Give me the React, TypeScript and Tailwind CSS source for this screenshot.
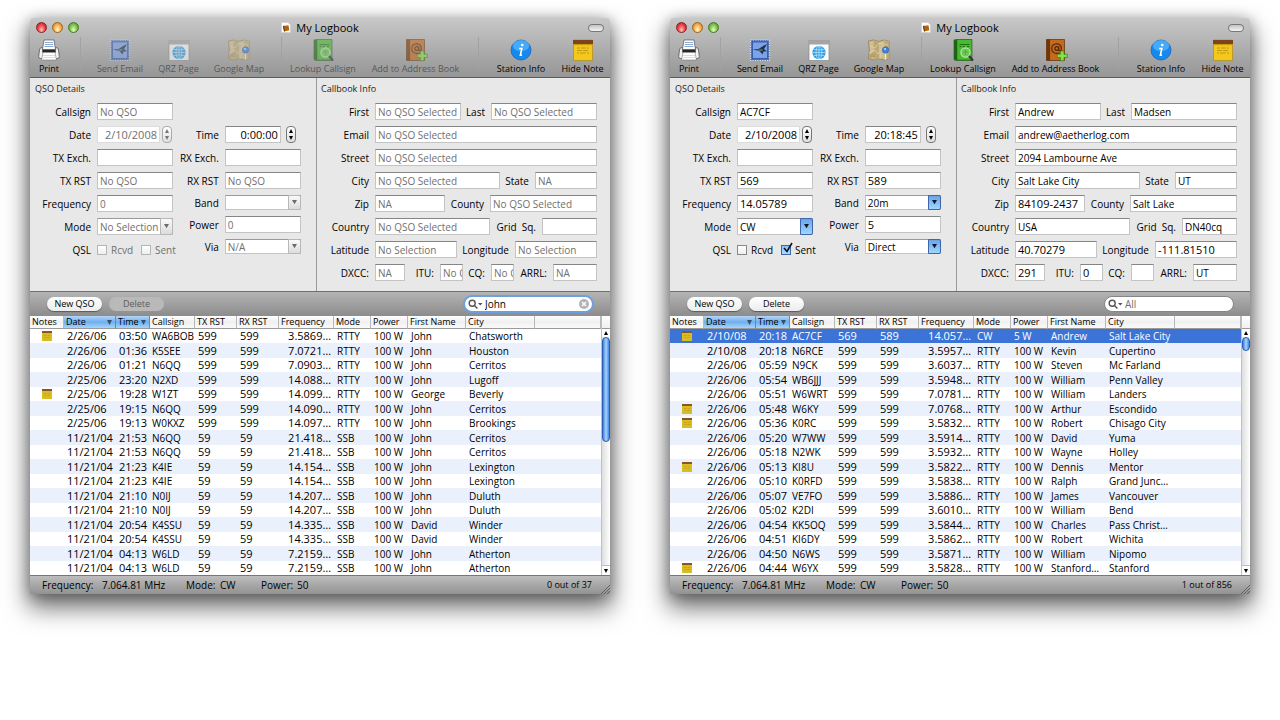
import { useId, type ReactNode } from "react";
import clsx from "clsx";

type Row = {
  note?: boolean;
  date: string;
  time: string;
  call: string;
  tx: string;
  rx: string;
  freq: string;
  mode: string;
  power: string;
  name: string;
  city: string;
};

type Log = {
  active: boolean;
  qso: Record<string, string>;
  rows: Row[];
  search: string;
  count: string;
  thumb: string;
};

function parseRows(text: string): Row[] {
  return text
    .trim()
    .split("\n")
    .map((line) => {
      const [note, date, time, call, tx, rx, freq, mode, power, name, city] = line.trim().split("|");
      return { note: note === "*", date, time, call, tx, rx, freq, mode, power, name, city };
    });
}

const johnRows = parseRows(`
*|2/26/06|03:50|WA6BOB|599|599|3.5869…|RTTY|100 W|John|Chatsworth
|2/26/06|01:36|K5SEE|599|599|7.0721…|RTTY|100 W|John|Houston
|2/26/06|01:21|N6QQ|599|599|7.0903…|RTTY|100 W|John|Cerritos
|2/25/06|23:20|N2XD|599|599|14.088…|RTTY|100 W|John|Lugoff
*|2/25/06|19:28|W1ZT|599|599|14.099…|RTTY|100 W|George|Beverly
|2/25/06|19:15|N6QQ|599|599|14.090…|RTTY|100 W|John|Cerritos
|2/25/06|19:13|W0KXZ|599|599|14.097…|RTTY|100 W|John|Brookings
|11/21/04|21:53|N6QQ|59|59|21.418…|SSB|100 W|John|Cerritos
|11/21/04|21:53|N6QQ|59|59|21.418…|SSB|100 W|John|Cerritos
|11/21/04|21:23|K4IE|59|59|14.154…|SSB|100 W|John|Lexington
|11/21/04|21:23|K4IE|59|59|14.154…|SSB|100 W|John|Lexington
|11/21/04|21:10|N0IJ|59|59|14.207…|SSB|100 W|John|Duluth
|11/21/04|21:10|N0IJ|59|59|14.207…|SSB|100 W|John|Duluth
|11/21/04|20:54|K4SSU|59|59|14.335…|SSB|100 W|David|Winder
|11/21/04|20:54|K4SSU|59|59|14.335…|SSB|100 W|David|Winder
|11/21/04|04:13|W6LD|59|59|7.2159…|SSB|100 W|John|Atherton
|11/21/04|04:13|W6LD|59|59|7.2159…|SSB|100 W|John|Atherton
`);

const allRows = parseRows(`
*|2/10/08|20:18|AC7CF|569|589|14.057…|CW|5 W|Andrew|Salt Lake City
|2/10/08|20:18|N6RCE|599|599|3.5957…|RTTY|100 W|Kevin|Cupertino
|2/26/06|05:59|N9CK|599|599|3.6037…|RTTY|100 W|Steven|Mc Farland
|2/26/06|05:54|WB6JJJ|599|599|3.5948…|RTTY|100 W|William|Penn Valley
|2/26/06|05:51|W6WRT|599|599|7.0781…|RTTY|100 W|William|Landers
*|2/26/06|05:48|W6KY|599|599|7.0768…|RTTY|100 W|Arthur|Escondido
*|2/26/06|05:36|K0RC|599|599|3.5832…|RTTY|100 W|Robert|Chisago City
|2/26/06|05:20|W7WW|599|599|3.5914…|RTTY|100 W|David|Yuma
|2/26/06|05:18|N2WK|599|599|3.5932…|RTTY|100 W|Wayne|Holley
*|2/26/06|05:13|KI8U|599|599|3.5822…|RTTY|100 W|Dennis|Mentor
|2/26/06|05:10|K0RFD|599|599|3.5838…|RTTY|100 W|Ralph|Grand Junc…
|2/26/06|05:07|VE7FO|599|599|3.5886…|RTTY|100 W|James|Vancouver
|2/26/06|05:02|K2DI|599|599|3.6010…|RTTY|100 W|William|Bend
|2/26/06|04:54|KK5OQ|599|599|3.5844…|RTTY|100 W|Charles|Pass Christ…
|2/26/06|04:51|KI6DY|599|599|3.5862…|RTTY|100 W|Robert|Wichita
|2/26/06|04:50|N6WS|599|599|3.5871…|RTTY|100 W|William|Nipomo
*|2/26/06|04:44|W6YX|599|599|3.5828…|RTTY|100 W|Stanford…|Stanford
`);

const logs: Log[] = [
  {
    active: false,
    qso: { date: "2/10/2008", time: "0:00:00", mode: "No Selection", band: "", via: "N/A" },
    rows: johnRows,
    search: "John",
    count: "0 out of 37",
    thumb: "h-[105px]",
  },
  {
    active: true,
    qso: {
      callsign: "AC7CF",
      date: "2/10/2008",
      time: "20:18:45",
      txRst: "569",
      rxRst: "589",
      freq: "14.05789",
      band: "20m",
      mode: "CW",
      power: "5",
      via: "Direct",
      first: "Andrew",
      last: "Madsen",
      email: "andrew@aetherlog.com",
      street: "2094 Lambourne Ave",
      city: "Salt Lake City",
      state: "UT",
      zip: "84109-2437",
      county: "Salt Lake",
      country: "USA",
      grid: "DN40cq",
      lat: "40.70279",
      lon: "-111.81510",
      dxcc: "291",
      itu: "0",
      arrl: "UT",
    },
    rows: allRows,
    search: "",
    count: "1 out of 856",
    thumb: "h-[14px]",
  },
];

export default function App() {
  return (
    <main className="flex gap-[60px] overflow-hidden bg-white px-[30px] pb-24 pt-[18px] font-['Open_Sans','Noto_Sans',sans-serif] text-[10px] leading-[14px] text-black">
      {logs.map((log) => (
        <LogWindow key={log.count} log={log} />
      ))}
    </main>
  );
}

function LogWindow({ log }: { log: Log }) {
  return (
    <section className="min-w-0 flex-1 rounded-t-[4px] bg-[#e8e8e8] shadow-[0_12px_24px_2px_rgba(0,0,0,0.55),0_2px_14px_rgba(0,0,0,0.3)]">
      <header className="rounded-t-[4px] border-b border-[#5c5c5c] bg-linear-to-b from-[#c8c8c8] to-[#969696]">
        <TitleBar />
        <Toolbar active={log.active} />
      </header>
      <div className="flex h-[213px]">
        <QsoDetails log={log} />
        <CallbookInfo log={log} />
      </div>
      <ActionBar log={log} />
      <div className="flex bg-white">
        <LogTable rows={log.rows} selected={log.active ? 0 : -1} />
        <Scrollbar thumb={log.thumb} />
      </div>
      <footer className="flex h-[19px] items-center border-t border-[#777] bg-linear-to-b from-[#bdbdbd] to-[#929292] pl-3">
        <span className="w-[60px]">Frequency:</span>
        <span className="w-[84px]">7.064.81 MHz</span>
        <span className="w-[34px]">Mode:</span>
        <span className="w-[41px]">CW</span>
        <span className="w-[36px]">Power:</span>
        <span className="flex-1">50</span>
        <span className="text-[9px]">{log.count}</span>
        <svg className="ml-2 size-[10px] self-end" viewBox="0 0 10 10" stroke="#555" strokeWidth="0.8">
          <path d="M1 10L10 1M4 10l6-6M7 10l3-3" />
        </svg>
      </footer>
    </section>
  );
}

function TitleBar() {
  return (
    <div className="grid h-[19px] grid-cols-[1fr_auto_1fr] items-center px-[6px]">
      <div className="flex gap-[5px]">
        <button aria-label="Close" className="size-[11px] rounded-full border border-[#8d2020] bg-radial-[at_50%_75%] from-[#ffc8c0] via-[#f2474a] to-[#a8141c]" />
        <button aria-label="Minimize" className="size-[11px] rounded-full border border-[#a0641e] bg-radial-[at_50%_75%] from-[#fff8b8] via-[#f8b456] to-[#c46f20]" />
        <button aria-label="Zoom" className="size-[11px] rounded-full border border-[#437a26] bg-radial-[at_50%_75%] from-[#e6ffb8] via-[#84c856] to-[#428826]" />
      </div>
      <h1 className="flex items-center gap-[5px] text-[11px]">
        <svg className="h-[11px] w-[10px]" viewBox="0 0 10 11">
          <path d="M0.5 0.5h6.5l2.5 2.5v7.5h-9z" fill="#fff" stroke="#ccc" strokeWidth="0.6" />
          <path d="M2 4l5.5-.8.8 5L3 9.4z" fill="#b5620f" />
          <path d="M2 4l1-.2.9 5.4-.9.2z" fill="#5e2f08" />
        </svg>
        My Logbook
      </h1>
      <button aria-label="Toggle toolbar" className="h-2 w-4 justify-self-end rounded-full border border-[#777] bg-linear-to-b from-[#c4c4c4] to-[#f4f4f4]" />
    </div>
  );
}

function Toolbar({ active }: { active: boolean }) {
  return (
    <nav className="flex h-10 items-stretch">
      <ToolButton label="Print" width="w-[38px]" icon={<PrintIcon />} />
      <Separator width="w-6" />
      <ToolButton label="Send Email" width="w-[56px]" icon={<StampIcon />} disabled={!active} />
      <ToolButton label="QRZ Page" width="w-[61px]" icon={<PageIcon />} disabled={!active} />
      <ToolButton label="Google Map" width="w-[60px]" icon={<MapIcon />} disabled={!active} />
      <Separator width="w-6" />
      <ToolButton label="Lookup Callsign" width="w-[60px]" icon={<LookupIcon />} disabled={!active} />
      <ToolButton label="Add to Address Book" width="w-[125px]" icon={<AddressIcon />} disabled={!active} />
      <Separator width="w-px" />
      <span className="flex-1" />
      <ToolButton label="Station Info" width="w-[82px]" icon={<InfoIcon />} />
      <ToolButton label="Hide Note" width="w-[41px]" icon={<NoteIcon />} />
      <span className="w-[7px]" />
    </nav>
  );
}

function Separator({ width }: { width: string }) {
  return (
    <span className={clsx("flex justify-center pb-2", width)}>
      <span className="w-px bg-[#a2a2a2]" />
    </span>
  );
}

function ToolButton({ label, width, icon, disabled }: { label: string; width: string; icon: ReactNode; disabled?: boolean }) {
  return (
    <button
      disabled={disabled}
      className={clsx("flex flex-col items-center whitespace-nowrap text-[9px] leading-[14px]", width, disabled ? "text-[#585858]" : "text-black")}
    >
      <span className={clsx("mt-[1px] h-[24px] w-[24px]", disabled && "opacity-60")}>{icon}</span>
      {label}
    </button>
  );
}

function PrintIcon() {
  return (
    <svg viewBox="0 0 24 24">
      <path d="M7 2h10l1.500 9.500h-13z" fill="#fff" stroke="#555" strokeWidth="0.7" />
      <path d="M8 4.500h8M7.800 6.500h8.400M7.500 8.500h9" stroke="#8fa9d6" strokeWidth="1" />
      <path d="M2.500 12q.5-2.500 2-2.500h1l-.5 2h14l-.5-2h1q1.500 0 2 2.500l.8 6.500q0 2-2 2h-16.600q-2 0-2-2z" fill="#f4f4f4" stroke="#555" strokeWidth="0.8" />
      <path d="M5.500 12h13l.5 2.500h-14z" fill="#23272d" />
      <path d="M6 14.500h12l1.500 7.500h-15z" fill="#fff" stroke="#777" strokeWidth="0.6" />
      <path d="M6.200 17.500h11.600M5.800 19.500h12.400" stroke="#d3d8e2" strokeWidth="0.9" />
    </svg>
  );
}

function StampIcon() {
  return (
    <svg viewBox="0 0 24 24">
      <rect x="2.500" y="2" width="19" height="20.500" fill="#4d6fb4" />
      <rect x="2.500" y="2" width="19" height="20.500" fill="none" stroke="#dfe5f2" strokeWidth="1.200" strokeDasharray="1.200 1.200" />
      <rect x="4.500" y="4" width="15" height="16.500" fill="#7ba2ea" stroke="#31559c" strokeWidth="0.8" />
      <path d="M4.500 11.500l6-.5q4-3 8.500-5-1.500 3-3 5l3 2.200-3.500.3-1 3q-2-2.500-3.500-3.800z" fill="#20324c" />
      <path d="M9 11.800l4.500-.5 2 .8-3 1z" fill="#5f8564" />
    </svg>
  );
}

function PageIcon() {
  return (
    <svg viewBox="0 0 24 24">
      <rect x="2" y="2.500" width="20" height="20" fill="#fafafa" stroke="#888" strokeWidth="0.7" />
      <rect x="2" y="2.500" width="20" height="4" fill="#a5a5a5" />
      <circle cx="12" cy="14.500" r="6.600" fill="#2b9ee8" />
      <g fill="none" stroke="#c3e6fd" strokeWidth="0.7">
        <ellipse cx="12" cy="14.500" rx="3" ry="6.500" />
        <path d="M12 8v13M5.500 14.500h13M6.500 11.300q5.500 1.600 11 0M6.500 17.700q5.500-1.600 11 0" />
      </g>
    </svg>
  );
}

function MapIcon() {
  return (
    <svg viewBox="0 0 24 24">
      <path d="M1.500 3l5-1 5.500 1.500 5-1.500 5.500 1.500-.5 8 .5 9-5 1.500-5.500-1.500-5 1.500-5.500-1.500.8-9z" fill="#d1bf90" stroke="#8a7548" strokeWidth="0.7" />
      <path d="M6.500 2l5.500 1.500v17l-5 1.500z" fill="#bca875" />
      <path d="M17 2l5.500 1.500-.5 8 .5 9-5 1.500z" fill="#bfab78" />
      <path d="M2 15l6-3 3 4 6-9M3 8l5 2 4-5 9 2M13 21l1-6" fill="none" stroke="#e2d6ab" strokeWidth="0.7" />
      <path d="M2.500 17l4-3 1 5-5 1z" fill="#a77747" opacity="0.5" />
      <path d="M18.500 14v7.500" stroke="#eee" strokeWidth="1.400" />
      <circle cx="18.500" cy="12" r="3.200" fill="#3c83e6" stroke="#245aad" strokeWidth="0.5" />
      <circle cx="18" cy="11" r="1" fill="#c5e0ff" />
    </svg>
  );
}

function LookupIcon() {
  return (
    <svg viewBox="0 0 24 24">
      <path d="M3 2l2-.5h16v21h-16.500l-1.500-1z" fill="#2f8d1f" stroke="#195810" strokeWidth="0.6" />
      <path d="M6.500 2h14v19.500h-14z" fill="#4ab92f" />
      <path d="M3 2l3 .2v19.800l-3-.8z" fill="#1f6415" />
      <path d="M8.500 6.500h10M8.500 8.500h2M12 8.500h2M16 8.500h2" stroke="#1d7212" strokeWidth="1.200" />
      <circle cx="14.500" cy="14.500" r="4.600" fill="#7fd868" fillOpacity="0.6" stroke="#bfe0b6" strokeWidth="1.200" />
      <path d="M12 14.500q2.500-2.500 5 0M14.500 12v5" fill="none" stroke="#55a544" strokeWidth="0.8" />
      <path d="M18 18l4 4.500" stroke="#333" strokeWidth="2" />
    </svg>
  );
}

function AddressIcon() {
  return (
    <svg viewBox="0 0 24 24">
      <path d="M2.500 1.500h18v21h-18z" fill="#b2601a" stroke="#603008" strokeWidth="0.7" />
      <path d="M2.500 1.500h3.500v21h-3.500z" fill="#6c370c" />
      <path d="M6.500 2h13.500v20h-13.500z" fill="#c46a1d" />
      <circle cx="12.800" cy="10.500" r="1.900" fill="none" stroke="#522607" strokeWidth="1.200" />
      <path d="M14.700 8.500v3q.2 1.500 1.600 1.200 1.500-.8 1-3.200-1-3.800-4.600-3.800-5 .3-5 5 .3 4.600 5.100 4.700 1.700 0 2.700-.7" fill="none" stroke="#522607" strokeWidth="1.100" />
      <path d="M16.500 13h3.500v3.200h3.300v3.300h-3.300v3.300h-3.500v-3.300h-3.300v-3.300h3.300z" fill="#86e04b" stroke="#318313" strokeWidth="0.7" />
    </svg>
  );
}

function InfoIcon() {
  return (
    <svg viewBox="0 0 24 24">
      <circle cx="12" cy="12" r="10" fill="#1689ee" stroke="#1a65b5" strokeWidth="0.8" />
      <ellipse cx="12" cy="7.500" rx="8.200" ry="5.500" fill="#62bbfb" opacity="0.65" />
      <circle cx="13.300" cy="7" r="1.300" fill="#fff" />
      <path d="M10.200 10.500h2.600l-1.400 6.800h1.600" fill="none" stroke="#fff" strokeWidth="1.600" />
    </svg>
  );
}

function NoteIcon() {
  return (
    <svg viewBox="0 0 24 24">
      <path d="M2.500 2h19v20.500h-19z" fill="#f4c91b" stroke="#ad8410" strokeWidth="0.6" />
      <path d="M2 2h20v4h-20z" fill="#7d431b" />
      <path d="M2.500 6h19v1.200h-19z" fill="#c89b14" />
      <path d="M6 10h3M10 10h5M16 10h2M6 12.500h5M12 12.500h5M6 15h2M9 15h6M16 15h2" stroke="#b8931a" strokeWidth="0.9" />
    </svg>
  );
}

function TextField({ label, labelWidth, width, value, placeholder }: {
  label: string;
  labelWidth: string;
  width: string;
  value?: string;
  placeholder?: string;
}) {
  const id = useId();
  const numeric = /^[-\d.]+$/.test(value ?? "");
  return (
    <>
      <label htmlFor={id} className={clsx("shrink-0 whitespace-pre pr-[6px] text-right", labelWidth)}>{label}</label>
      <input
        id={id}
        defaultValue={value}
        placeholder={placeholder}
        className={clsx(
          "h-[17px] min-w-0 border border-[#c4c4c4] border-t-[#858585] bg-white pl-[2px] outline-none placeholder:text-[#707070]",
          numeric && "text-[11px]",
          width,
        )}
      />
    </>
  );
}

function FieldRow({ children }: { children: ReactNode }) {
  return <div className="flex items-center">{children}</div>;
}

function ComboField({ label, labelWidth, value, active, height }: {
  label: string;
  labelWidth: string;
  value: string;
  active: boolean;
  height: string;
}) {
  const id = useId();
  return (
    <FieldRow>
      <label htmlFor={id} className={clsx("shrink-0 pr-[6px] text-right", labelWidth)}>{label}</label>
      <span className={clsx("relative w-[76px]", height)}>
        <select
          id={id}
          disabled={!active}
          defaultValue={value}
          className="h-full w-full appearance-none border border-[#c4c4c4] border-t-[#999] bg-white pl-[2px] opacity-100 outline-none disabled:text-[#707070]"
        >
          <option>{value}</option>
        </select>
        <span
          className={clsx(
            "pointer-events-none absolute inset-y-0 right-0 flex w-[13px] items-center justify-center rounded-r-[2px] border",
            active ? "border-[#3d67ad] bg-linear-to-b from-[#6da3e6] to-[#9fd6ff]" : "border-[#b8b8b8] bg-linear-to-b from-[#fafafa] to-[#dcdcdc]",
          )}
        >
          <svg className="w-[5px]" viewBox="0 0 6 5" fill={active ? "#10182c" : "#6b6b6b"}>
            <path d="M0 0h6L3 5z" />
          </svg>
        </span>
      </span>
    </FieldRow>
  );
}

function StepField({ label, labelWidth, width, value, disabled, plain, gap }: {
  label: string;
  labelWidth: string;
  width: string;
  value: string;
  disabled?: boolean;
  plain?: boolean;
  gap: string;
}) {
  const id = useId();
  return (
    <FieldRow>
      <label htmlFor={id} className={clsx("shrink-0 pr-[6px] text-right", labelWidth)}>{label}</label>
      <input
        id={id}
        defaultValue={value}
        disabled={disabled}
        className={clsx(
          "h-[17px] border bg-white pr-[2px] text-right text-[11px] outline-none",
          plain ? "border-[#dcdcdc]" : "border-[#c4c4c4] border-t-[#858585]",
          disabled && "text-[#707070]",
          width,
        )}
      />
      <span className={clsx("flex h-[17px] w-[10px] flex-col rounded-[4px] border bg-linear-to-b from-white to-[#e0e0e0]", disabled ? "border-[#aaa]" : "border-[#777]", gap)}>
        {["Increase", "Decrease"].map((name) => (
          <button key={name} aria-label={`${name} ${label}`} disabled={disabled} className="flex flex-1 items-center justify-center">
            <svg className="w-1" viewBox="0 0 4 4" fill={disabled ? "#777" : "#000"}>
              <path d={name === "Increase" ? "M0 4h4L2 0z" : "M0 0h4L2 4z"} />
            </svg>
          </button>
        ))}
      </span>
    </FieldRow>
  );
}

function CheckField({ label, checked, active }: { label: string; checked: boolean; active: boolean }) {
  return (
    <label className={clsx("relative flex items-center gap-1", !active && "text-[#707070]")}>
      <input
        type="checkbox"
        defaultChecked={checked}
        disabled={!active}
        className="size-[10px] appearance-none border border-[#888] bg-linear-to-b from-white to-[#eee] checked:border-[#3d67ad] checked:from-[#8fc0f5] checked:to-[#a9dcff] disabled:border-[#b5b5b5]"
      />
      {label}
      {checked && (
        <svg className="pointer-events-none absolute -top-[1px] left-[1px] size-3" viewBox="0 0 12 12" fill="none" stroke="#0c1220" strokeWidth="1.600">
          <path d="M2 6l3 3.500L10 1" />
        </svg>
      )}
    </label>
  );
}

function QsoDetails({ log }: { log: Log }) {
  const { active, qso } = log;
  const hint = active ? undefined : "No QSO";
  return (
    <section className="w-[287px] border-r border-[#999]">
      <h2 className="h-[25px] pl-[5px] pt-[4px] text-[9px] text-[#222]">QSO Details</h2>
      <div className="flex">
        <div className="flex flex-col gap-[6px]">
          <FieldRow>
            <TextField label="Callsign" labelWidth="w-[67px]" width="w-[76px]" value={qso.callsign} placeholder={hint} />
          </FieldRow>
          <StepField label="Date" labelWidth="w-[67px]" width="w-[63px]" value={qso.date} disabled={!active} plain gap="ml-[2px]" />
          <FieldRow>
            <TextField label="TX Exch." labelWidth="w-[67px]" width="w-[76px]" />
          </FieldRow>
          <FieldRow>
            <TextField label="TX RST" labelWidth="w-[67px]" width="w-[76px]" value={qso.txRst} placeholder={hint} />
          </FieldRow>
          <FieldRow>
            <TextField label="Frequency" labelWidth="w-[67px]" width="w-[76px]" value={qso.freq} placeholder="0" />
          </FieldRow>
          <ComboField label="Mode" labelWidth="w-[67px]" value={qso.mode} active={active} height="h-[17px]" />
          <div className="flex h-[17px] items-center" role="group" aria-label="QSL">
            <span className="w-[67px] pr-[6px] text-right">QSL</span>
            <span className="w-11">
              <CheckField label="Rcvd" checked={false} active={active} />
            </span>
            <CheckField label="Sent" checked={active} active={active} />
          </div>
        </div>
        <div className="flex flex-col gap-[6px] pt-[23px]">
          <StepField label="Time" labelWidth="w-[49px]" width="w-[56px]" value={qso.time} gap="ml-[5px]" />
          <FieldRow>
            <TextField label="RX Exch." labelWidth="w-[49px]" width="w-[76px]" />
          </FieldRow>
          <FieldRow>
            <TextField label="RX RST" labelWidth="w-[49px]" width="w-[76px]" value={qso.rxRst} placeholder={hint} />
          </FieldRow>
          <ComboField label="Band" labelWidth="w-[49px]" value={qso.band} active={active} height="h-[15px]" />
          <FieldRow>
            <TextField label="Power" labelWidth="w-[49px]" width="w-[76px]" value={qso.power} placeholder="0" />
          </FieldRow>
          <ComboField label="Via" labelWidth="w-[49px]" value={qso.via} active={active} height="h-[15px]" />
        </div>
      </div>
    </section>
  );
}

function CallbookInfo({ log }: { log: Log }) {
  const { active, qso } = log;
  const none = active ? undefined : "No QSO Selected";
  const selection = active ? undefined : "No Selection";
  const na = active ? undefined : "NA";
  return (
    <section className="min-w-0 flex-1 pr-[13px]">
      <h2 className="h-[25px] pl-[4px] pt-[4px] text-[9px] text-[#222]">Callbook Info</h2>
      <div className="flex flex-col gap-[6px]">
        <FieldRow>
          <TextField label="First" labelWidth="w-[58px]" width="w-[86px]" value={qso.first} placeholder={none} />
          <TextField label="Last" labelWidth="w-[30px]" width="flex-1" value={qso.last} placeholder={none} />
        </FieldRow>
        <FieldRow>
          <TextField label="Email" labelWidth="w-[58px]" width="flex-1" value={qso.email} placeholder={none} />
        </FieldRow>
        <FieldRow>
          <TextField label="Street" labelWidth="w-[58px]" width="flex-1" value={qso.street} placeholder={none} />
        </FieldRow>
        <FieldRow>
          <TextField label="City" labelWidth="w-[58px]" width="w-[125px]" value={qso.city} placeholder={none} />
          <TextField label="State" labelWidth="w-[35px]" width="flex-1" value={qso.state} placeholder={na} />
        </FieldRow>
        <FieldRow>
          <TextField label="Zip" labelWidth="w-[58px]" width="w-[70px]" value={qso.zip} placeholder={na} />
          <TextField label="County" labelWidth="w-[45px]" width="flex-1" value={qso.county} placeholder={none} />
        </FieldRow>
        <FieldRow>
          <TextField label="Country" labelWidth="w-[58px]" width="w-[115px]" value={qso.country} placeholder={none} />
          <TextField label="Grid  Sq." labelWidth="w-[52px]" width="flex-1" value={qso.grid} />
        </FieldRow>
        <FieldRow>
          <TextField label="Latitude" labelWidth="w-[58px]" width="w-[82px]" value={qso.lat} placeholder={selection} />
          <TextField label="Longitude" labelWidth="w-[58px]" width="flex-1" value={qso.lon} placeholder={selection} />
        </FieldRow>
        <FieldRow>
          <TextField label="DXCC:" labelWidth="w-[58px]" width="w-[30px]" value={qso.dxcc} placeholder={na} />
          <TextField label="ITU:" labelWidth="w-[35px]" width="w-[23px]" value={qso.itu} placeholder={none} />
          <TextField label="CQ:" labelWidth="w-[28px]" width="w-[23px]" placeholder={none} />
          <TextField label="ARRL:" labelWidth="w-[39px]" width="flex-1" value={qso.arrl} placeholder={na} />
        </FieldRow>
      </div>
    </section>
  );
}

function ActionBar({ log }: { log: Log }) {
  const pill = "h-[14px] w-[55px] rounded-full text-[9px] leading-[14px]";
  return (
    <div className="flex h-[25px] items-center border-t border-[#6e6e6e] bg-linear-to-b from-[#b4b4b4] to-[#8c8c8c] pl-[17px] pr-4">
      <button className={clsx(pill, "bg-linear-to-b from-white to-[#ececec] shadow-[0_1px_1px_rgba(0,0,0,0.4)]")}>New QSO</button>
      <button
        disabled={!log.active}
        className={clsx(
          pill,
          "ml-[7px]",
          log.active ? "bg-linear-to-b from-white to-[#ececec] shadow-[0_1px_1px_rgba(0,0,0,0.4)]" : "bg-[#b9b9b9] text-[#5c5c5c]",
        )}
      >
        Delete
      </button>
      <div
        className={clsx(
          "ml-auto flex items-center rounded-full bg-white px-[3px]",
          log.active ? "h-4 w-[130px] border border-[#858585]" : "h-[18px] w-[131px] border-2 border-[#6c9fdd]",
        )}
      >
        <svg className="h-[10px] w-[15px] shrink-0" viewBox="0 0 15 10" fill="none" stroke="#555" strokeWidth="1.400">
          <circle cx="4.200" cy="4.200" r="3" />
          <path d="M6.400 6.400l3 3" />
          <path d="M10 4h4.500l-2.200 2.600z" fill="#555" stroke="none" />
        </svg>
        <input
          aria-label="Search log"
          defaultValue={log.search}
          placeholder="All"
          className="min-w-0 flex-1 bg-transparent pl-[2px] outline-none placeholder:text-[#707070]"
        />
        {log.search && (
          <button aria-label="Clear search" className="size-[10px] rounded-full bg-[#b3b3b3]">
            <svg viewBox="0 0 10 10" stroke="#fff" strokeWidth="1.400">
              <path d="M3 3l4 4M7 3l-4 4" />
            </svg>
          </button>
        )}
      </div>
    </div>
  );
}

const columns = [
  { title: "Notes", width: "w-[34px]" },
  { title: "Date", width: "w-[52px]", sorted: true },
  { title: "Time", width: "w-[34px]", sorted: true },
  { title: "Callsign", width: "w-[45px]" },
  { title: "TX RST", width: "w-[42px]" },
  { title: "RX RST", width: "w-[42px]" },
  { title: "Frequency", width: "w-[55px]" },
  { title: "Mode", width: "w-[37px]" },
  { title: "Power", width: "w-[37px]" },
  { title: "First Name", width: "w-[58px]" },
  { title: "City", width: "w-[69px]" },
  { title: "", width: "w-auto" },
];

function LogTable({ rows, selected }: { rows: Row[]; selected: number }) {
  return (
    <table className="min-w-0 flex-1 table-fixed border-separate border-spacing-0 whitespace-nowrap text-left">
      <thead>
        <tr className="h-[13px]">
          {columns.map((col) => (
            <th
              key={col.title}
              className={clsx(
                "border-b border-r border-b-[#9a9a9a] p-0 pl-[2px] text-[9px] font-normal leading-[12px]",
                col.width,
                col.sorted ? "border-r-[#5d8cc4] bg-linear-to-b from-[#b5d5f5] via-[#6eaeee] to-[#a4d5fb]" : "border-r-[#b8b8b8] bg-linear-to-b from-white via-[#f0f0f0] to-[#fafafa]",
              )}
            >
              <span className="flex h-[12px] items-center justify-between pr-[3px]">
                {col.title}
                {col.sorted && (
                  <svg className="w-[5px]" viewBox="0 0 5 5" fill="#34506f">
                    <path d="M0 0h5L2.500 5z" />
                  </svg>
                )}
              </span>
            </th>
          ))}
        </tr>
      </thead>
      <tbody>
        {rows.map((row, i) => (
          <tr key={i} className={clsx("odd:h-[14px] even:h-[15px]", i === selected ? "bg-[#3b73d6] text-white" : "even:bg-[#eaf1fd]")}>
            <td className="p-0">
              {row.note && (
                <svg className="mx-auto size-[10px]" viewBox="0 0 10 10" role="img" aria-label="Note">
                  <path d="M0 0h10v10H0z" fill="#d9bc22" />
                  <path d="M0 0h10v2H0z" fill="#8a5424" />
                  <path d="M2 4.500h3M6 4.500h2M2 6.500h2M5 6.500h3" stroke="#bb9d1a" strokeWidth="0.7" />
                </svg>
              )}
            </td>
            <Cell numeric>{row.date}</Cell>
            <Cell numeric>{row.time}</Cell>
            <td className="p-0 pl-[2px] leading-[14px]">{row.call}</td>
            <Cell numeric>{row.tx}</Cell>
            <Cell numeric>{row.rx}</Cell>
            <td className="p-0 pr-[3px] text-right text-[11px] leading-[14px]">{row.freq}</td>
            <Cell>{row.mode}</Cell>
            <Cell>{row.power}</Cell>
            <Cell>{row.name}</Cell>
            <Cell>{row.city}</Cell>
            <td className="p-0" />
          </tr>
        ))}
      </tbody>
    </table>
  );
}

function Cell({ numeric, children }: { numeric?: boolean; children: ReactNode }) {
  return <td className={clsx("p-0 pl-[3px] leading-[14px]", numeric && "text-[11px]")}>{children}</td>;
}

function Scrollbar({ thumb }: { thumb: string }) {
  return (
    <div className="flex w-[9px] shrink-0 flex-col border-l border-[#c0c0c0] bg-linear-to-r from-[#dedede] to-white">
      <span className="h-[13px] border-b border-[#9a9a9a] bg-linear-to-b from-white to-[#f0f0f0]" />
      <button aria-label="Scroll up" className="flex h-2 items-center justify-center bg-white">
        <svg className="w-1" viewBox="0 0 4 4">
          <path d="M0 4h4L2 0z" />
        </svg>
      </button>
      <span className={clsx("rounded-full border border-[#2a5cb5] bg-linear-to-r from-[#3d7fdc] via-[#a8d4ff] to-[#3f86e4]", thumb)} />
      <span className="flex-1" />
      <button aria-label="Scroll down" className="flex h-[10px] items-center justify-center border-t border-[#c0c0c0] bg-white">
        <svg className="w-1" viewBox="0 0 4 4">
          <path d="M0 0h4L2 4z" />
        </svg>
      </button>
    </div>
  );
}
